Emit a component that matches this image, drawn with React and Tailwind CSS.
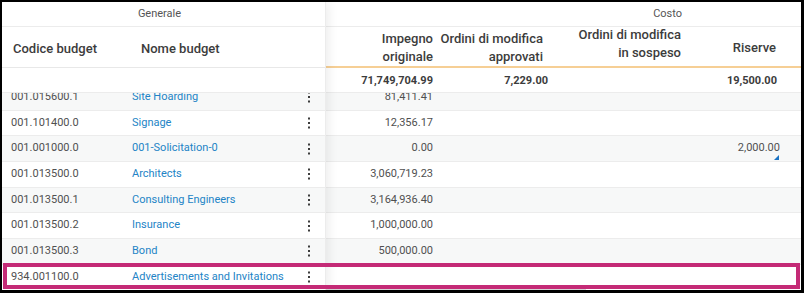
import React from 'react';

const rows = [
    { code: '001.015600.1', name: 'Site Hoarding', impegno: '81,411.41' },
    { code: '001.101400.0', name: 'Signage', impegno: '12,356.17' },
    { code: '001.001000.0', name: '001-Solicitation-0', impegno: '0.00', riserve: '2,000.00' },
    { code: '001.013500.0', name: 'Architects', impegno: '3,060,719.23' },
    { code: '001.013500.1', name: 'Consulting Engineers', impegno: '3,164,936.40' },
    { code: '001.013500.2', name: 'Insurance', impegno: '1,000,000.00' },
    { code: '001.013500.3', name: 'Bond', impegno: '500,000.00' },
    { code: '934.001100.0', name: 'Advertisements and Invitations', impegno: '' },
];

const Kebab = () => (
    <svg width="4" height="12" viewBox="0 0 4 12" className="text-[#3c3c3c]">
        <rect x="1" y="0.5" width="2" height="2" fill="currentColor" />
        <rect x="1" y="5" width="2" height="2" fill="currentColor" />
        <rect x="1" y="9.5" width="2" height="2" fill="currentColor" />
    </svg>
);

const App = () => {
    return (
        <div className="w-[804px] h-[293px] bg-white border-black border-t-2 border-l-2 border-r-[3px] border-b-[3px] relative overflow-hidden font-['Roboto',sans-serif] text-[11px] text-[#505050]">
            <div className="flex h-full">
                {/* Frozen pane */}
                <div className="w-[324px] shrink-0 flex flex-col relative z-10 bg-white border-r border-[#ececec] shadow-[3px_0_10px_rgba(0,0,0,0.07)]">
                    <div className="h-[25px] shrink-0 border-b border-[#ececec] flex items-center justify-center pr-2 pt-[1px] text-[#555]">
                        Generale
                    </div>
                    <div className="h-[41px] shrink-0 border-b border-[#e8e8e8] flex items-center pt-[3px] text-[13px] font-medium text-[#3c3c3c]">
                        <div className="w-[121px] pl-[11px]">Codice budget</div>
                        <div className="pl-[18px]">Nome budget</div>
                    </div>
                    <div className="h-[25px] shrink-0 border-b border-[#ececec]"></div>
                    <div className="h-[195px] shrink-0 overflow-hidden">
                        <div className="-mt-[8px]">
                            {rows.map((r, i) => (
                                <div key={r.code} className={`h-[25.67px] flex items-center border-b border-[#ececec] ${i % 2 === 0 ? 'bg-[#f7f8f8]' : 'bg-white'}`}>
                                    <div className="w-[121px] pl-[9px]">{r.code}</div>
                                    <div className="flex-1 pl-[9px] text-[#2384c6] truncate">{r.name}</div>
                                    <div className="w-[32px] flex justify-center"><Kebab /></div>
                                </div>
                            ))}
                        </div>
                    </div>
                </div>

                {/* Scrolling pane */}
                <div className="flex-1 flex flex-col">
                    <div className="h-[25px] shrink-0 border-b border-[#ececec] flex items-center pt-[1px] text-[#555]">
                        <div className="w-[363px] text-right pr-[7px]">Costo</div>
                    </div>
                    <div className="h-[41px] shrink-0 border-b-2 border-[#f6cf95] flex text-[13px] font-medium text-[#3c3c3c] leading-[18px] whitespace-nowrap">
                        <div className="w-[115px] pr-2 pt-[3px] flex items-center justify-end text-right">Impegno<br />originale</div>
                        <div className="w-[115px] pr-[13px] pt-[3px] flex items-center justify-end text-right">Ordini di modifica<br />approvati</div>
                        <div className="w-[133px] pr-2 pb-[5px] flex items-center justify-end text-right">Ordini di modifica<br />in sospeso</div>
                        <div className="w-[96px] pr-[9px] pt-[3px] flex items-center justify-end">Riserve</div>
                    </div>
                    <div className="h-[25px] shrink-0 border-b border-[#ececec] flex items-center pt-[2px] font-bold text-[#3c3c3c]">
                        <div className="w-[115px] pr-2 text-right">71,749,704.99</div>
                        <div className="w-[115px] pr-2 text-right">7,229.00</div>
                        <div className="w-[133px]"></div>
                        <div className="w-[96px] pr-2 text-right">19,500.00</div>
                    </div>
                    <div className="h-[195px] shrink-0 overflow-hidden">
                        <div className="-mt-[8px]">
                            {rows.map((r, i) => (
                                <div key={r.code} className={`h-[25.67px] flex items-center border-b border-[#ececec] ${i % 2 === 0 ? 'bg-[#f7f8f8]' : 'bg-white'}`}>
                                    <div className="w-[115px] pr-2 text-right">{r.impegno}</div>
                                    <div className="w-[115px]"></div>
                                    <div className="w-[133px]"></div>
                                    <div className="w-[96px] h-full pr-[5px] flex items-center justify-end relative">
                                        {r.riserve}
                                        {r.riserve && (
                                            <span className="absolute right-[6px] bottom-[1px] w-0 h-0 border-l-[5px] border-l-transparent border-b-[5px] border-b-[#1a73c4]"></span>
                                        )}
                                    </div>
                                </div>
                            ))}
                        </div>
                    </div>
                    <div className="h-[2px] flex">
                        <div className="w-[260px] bg-[#d6d6d6]"></div>
                    </div>
                </div>
            </div>

            {/* Highlight annotation */}
            <div className="absolute z-20 left-[1px] top-[261px] w-[797px] h-[26px] border-4 border-[#c42a76] pointer-events-none"></div>
        </div>
    );
};

export default App;
